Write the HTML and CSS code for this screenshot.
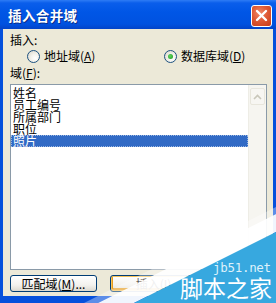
FILE: index.html
```html
<!DOCTYPE html>
<html>
<head>
<meta charset="utf-8">
<link rel="stylesheet" href="styles.css">
</head>
<body>
<div class="window">
  <div class="titlebar">
    <span class="title">插入合并域</span>
    <span class="close"><svg width="13" height="13" viewBox="0 0 13 13"><path d="M2 2 L11 11 M11 2 L2 11" stroke="#fff" stroke-width="2.4" stroke-linecap="round"/></svg></span>
  </div>
  <div class="client">
    <div class="label">插入:</div>
    <div class="radios">
      <div class="radio"><span class="dot"></span><span>地址域(<u>A</u>)</span></div>
      <div class="radio on"><span class="dot"></span><span>数据库域(<u>D</u>)</span></div>
    </div>
    <div class="label l2">域(<u>F</u>):</div>
    <div class="listbox">
      <div class="items">
        <div class="item">姓名</div>
        <div class="item">员工编号</div>
        <div class="item">所属部门</div>
        <div class="item">职位</div>
        <div class="item sel">照片</div>
      </div>
      <div class="scroll">
        <div class="sbtn"><svg width="9" height="6" viewBox="0 0 9 6"><path d="M1 5 L4.5 1.5 L8 5" stroke="#c9c7ba" stroke-width="1.6" fill="none"/></svg></div>
      </div>
    </div>
    <div class="buttons">
      <div class="btn">匹配域(<u>M</u>)...</div>
      <div class="btn def">插入(<u>I</u>)</div>
    </div>
  </div>
  <div class="watermark">
    <div class="band2"></div>
    <div class="band1"></div>
    <div class="tri"></div>
    <div class="wm-url">jb51.net</div>
    <div class="wm-name">脚本之家</div>
  </div>
</div>
</body>
</html>
```
FILE: styles.css
```css
html, body {
  margin: 0;
  padding: 0;
  width: 276px;
  height: 303px;
  overflow: hidden;
}
body {
  font-family: "Noto Sans CJK SC", "DejaVu Sans", sans-serif;
  font-size: 12px;
}
.window {
  position: relative;
  width: 276px;
  height: 303px;
  box-sizing: border-box;
  background: #0550DC;
  display: flex;
  flex-direction: column;
  overflow: hidden;
}
.titlebar {
  height: 29px;
  flex: none;
  display: flex;
  align-items: center;
  justify-content: space-between;
  padding: 0 4px 0 8px;
  background: linear-gradient(#2E7CF5 0px, #0A5EEB 3px, #0056E6 12px, #0052E0 24px, #0344C8 29px);
  color: #fff;
}
.title {
  font-size: 13.5px;
  font-weight: bold;
  letter-spacing: 0.4px;
  line-height: 16px;
  text-shadow: 1px 1px 0 #0B2F8A;
}
.close {
  width: 19px;
  height: 20px;
  border: 1px solid #fff;
  border-radius: 3px;
  background: radial-gradient(circle at 40% 35%, #F08A6A 0%, #DF5A35 45%, #C73A17 100%);
  display: flex;
  align-items: center;
  justify-content: center;
  margin-top: 2px;
}
.client {
  flex: 1;
  margin: 0 3px 7px 3px;
  background: #ECE9D8;
  padding: 4px 6px 0 7px;
  display: flex;
  flex-direction: column;
  color: #000;
  overflow: hidden;
}
.label {
  line-height: 13px;
  height: 13px;
}
.radios {
  display: flex;
  align-items: center;
  height: 18px;
  margin-top: 1px;
  padding-left: 17px;
  line-height: 14px;
}
.radio {
  display: flex;
  align-items: center;
  gap: 4px;
}
.radio:first-child {
  width: 137px;
}
.dot {
  width: 11px;
  height: 11px;
  border: 1px solid #1C5180;
  border-radius: 50%;
  background: radial-gradient(circle at 65% 65%, #FFFFFF 0%, #F3F2EC 40%, #D6D3C6 100%);
  display: flex;
  align-items: center;
  justify-content: center;
}
.radio.on .dot::after {
  content: "";
  width: 5px;
  height: 5px;
  border-radius: 50%;
  background: radial-gradient(circle at 40% 40%, #5FD35F, #1E9A1E);
}
.l2 {
  margin-top: 1px;
}
.listbox {
  margin-top: 5px;
  height: 184px;
  border: 1px solid #8A9AA8;
  background: #fff;
  display: flex;
  flex: none;
}
.items {
  flex: 1;
  padding-top: 2px;
}
.item {
  height: 12px;
  line-height: 12px;
  padding-left: 2px;
  font-size: 12px;
}
.item.sel {
  background: #316AC5;
  color: #fff;
  outline: 1px dotted #9AB6E0;
  outline-offset: -1px;
}
.scroll {
  width: 17px;
  background: #F6F5F0;
  border-left: 1px solid #EEEDE6;
  padding-top: 3px;
}
.sbtn {
  height: 15px;
  margin: 0 1px;
  border: 1px solid #E8E6DC;
  border-radius: 2px;
  background: #F7F6F2;
  display: flex;
  align-items: center;
  justify-content: center;
}
.buttons {
  display: flex;
  gap: 13px;
  margin-top: 5px;
}
.btn {
  height: 15px;
  line-height: 15px;
  width: 85px;
  border: 1px solid #003C74;
  border-radius: 3px;
  background: linear-gradient(#FFFFFF, #F3F2EE 60%, #DCD9CF);
  text-align: center;
  font-size: 12px;
  overflow: hidden;
}
.btn.def {
  box-shadow: inset 0 0 0 1px #F6C35A, inset 0 -1px 0 2px #E59B1E;
}
.watermark {
  position: absolute;
  left: 0;
  top: 0;
  width: 276px;
  height: 303px;
  pointer-events: none;
}
.band1, .band2, .tri {
  position: absolute;
  left: 0;
  top: 0;
  width: 276px;
  height: 303px;
}
.band2 {
  background: rgba(255,255,255,0.35);
  clip-path: polygon(84px 303px, 276px 207px, 276px 214px, 98px 303px);
}
.band1 {
  background: rgba(255,255,255,0.94);
  clip-path: polygon(98px 303px, 276px 214px, 276px 232px, 134px 303px);
}
.tri {
  background: #37A8DF;
  clip-path: polygon(134px 303px, 276px 232px, 276px 303px);
}
.wm-url {
  position: absolute;
  left: 213px;
  top: 261px;
  font-family: "DejaVu Sans Mono", monospace;
  font-size: 12.5px;
  line-height: 14px;
  letter-spacing: -0.3px;
  color: #DDF1FB;
}
.wm-name {
  position: absolute;
  left: 180px;
  top: 274px;
  font-size: 23px;
  line-height: 26px;
  color: #fff;
}
```
